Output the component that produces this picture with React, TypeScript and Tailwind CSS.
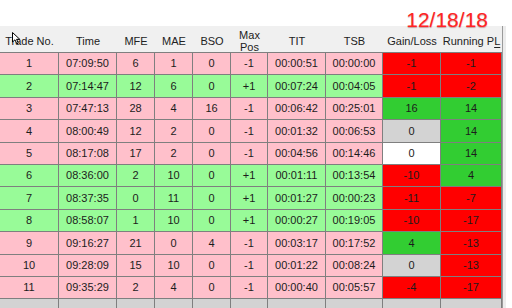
const cols = "grid grid-cols-[59px_58px_38px_38px_38px_37px_58px_57px_58px_61px]";

type Row = {
  cells: string[];
  bg: string;
  gain: string;
  run: string;
};

const pink = "bg-[#ffc0cb]";
const lime = "bg-[#98fb98]";
const red = "bg-[#ff0000]";
const green = "bg-[#32cd32]";
const gray = "bg-[#d3d3d3]";
const white = "bg-white";

const rows: Row[] = [
  { cells: ["1", "07:09:50", "6", "1", "0", "-1", "00:00:51", "00:00:00", "-1", "-1"], bg: pink, gain: red, run: red },
  { cells: ["2", "07:14:47", "12", "6", "0", "+1", "00:07:24", "00:04:05", "-1", "-2"], bg: lime, gain: red, run: red },
  { cells: ["3", "07:47:13", "28", "4", "16", "-1", "00:06:42", "00:25:01", "16", "14"], bg: pink, gain: green, run: green },
  { cells: ["4", "08:00:49", "12", "2", "0", "-1", "00:01:32", "00:06:53", "0", "14"], bg: pink, gain: gray, run: green },
  { cells: ["5", "08:17:08", "17", "2", "0", "-1", "00:04:56", "00:14:46", "0", "14"], bg: pink, gain: white, run: green },
  { cells: ["6", "08:36:00", "2", "10", "0", "+1", "00:01:11", "00:13:54", "-10", "4"], bg: lime, gain: red, run: green },
  { cells: ["7", "08:37:35", "0", "11", "0", "+1", "00:01:27", "00:00:23", "-11", "-7"], bg: lime, gain: red, run: red },
  { cells: ["8", "08:58:07", "1", "10", "0", "+1", "00:00:27", "00:19:05", "-10", "-17"], bg: lime, gain: red, run: red },
  { cells: ["9", "09:16:27", "21", "0", "4", "-1", "00:03:17", "00:17:52", "4", "-13"], bg: pink, gain: green, run: red },
  { cells: ["10", "09:28:09", "15", "10", "0", "-1", "00:01:22", "00:08:24", "0", "-13"], bg: pink, gain: gray, run: red },
  { cells: ["11", "09:35:29", "2", "4", "0", "-1", "00:00:40", "00:05:57", "-4", "-17"], bg: pink, gain: red, run: red },
];

const headers = ["Trade No.", "Time", "MFE", "MAE", "BSO", "Max Pos", "TIT", "TSB", "Gain/Loss", "Running PL"];

function Cursor() {
  // small arrow pointer sitting over the first header
  return (
    <svg className="absolute left-[12px] top-[32px] z-20" width="9" height="13" viewBox="0 0 9 13">
      <path d="M0.5 0.5 L0.5 10 L3 7.8 L4.8 11.8 L6.3 11.1 L4.6 7.3 L7.8 7.3 Z" fill="#fff" stroke="#000" strokeWidth="1" />
    </svg>
  );
}

export default function App() {
  return (
    <div className="relative h-[308px] w-[512px] overflow-hidden bg-white text-[11px] text-[#1c1c1c] [font-family:'Liberation_Sans',Arial,sans-serif]">
      <div className="relative z-10 flex h-[26px] items-end justify-end pr-[24px]">
        <span className="mb-[-4px] text-[21px] leading-none text-[#ff2424] [text-shadow:0_1px_1px_rgba(120,0,0,0.35)]">
          12/18/18
        </span>
      </div>

      <div className="flex">
        <div className="w-[502px]">
          <div className={`${cols} h-[27px] border-b border-[#7f7f7f] bg-[#f0f0f0]`}>
            {headers.map((h) => (
              <div key={h} className="flex items-center justify-center pt-[3px] text-center leading-[12px] text-[#222]">
                {h === "Max Pos" ? (
                  <span>
                    Max
                    <br />
                    Pos
                  </span>
                ) : h === "Running PL" ? (
                  <span>
                    Running P<span className="underline underline-offset-[2px]">L</span>
                  </span>
                ) : (
                  h
                )}
              </div>
            ))}
          </div>

          {rows.map((r, i) => (
            <div key={i} className={`${cols} h-[22.4px] border-b border-[#7f7f7f]`}>
              {r.cells.map((c, j) => {
                const bg = j === 8 ? r.gain : j === 9 ? r.run : r.bg;
                return (
                  <div
                    key={j}
                    className={`flex items-center justify-center border-r border-[#7f7f7f] ${bg}`}
                  >
                    {c}
                  </div>
                );
              })}
            </div>
          ))}

          <div className={`${cols} h-[12px]`}>
            {headers.map((h) => (
              <div key={h} className="border-r border-[#7f7f7f] bg-[#d3d3d3]" />
            ))}
          </div>
        </div>
        <div className="w-[4px] border-l border-[#9a9a9a] bg-[#ececec]" />
      </div>

      <Cursor />
    </div>
  );
}
